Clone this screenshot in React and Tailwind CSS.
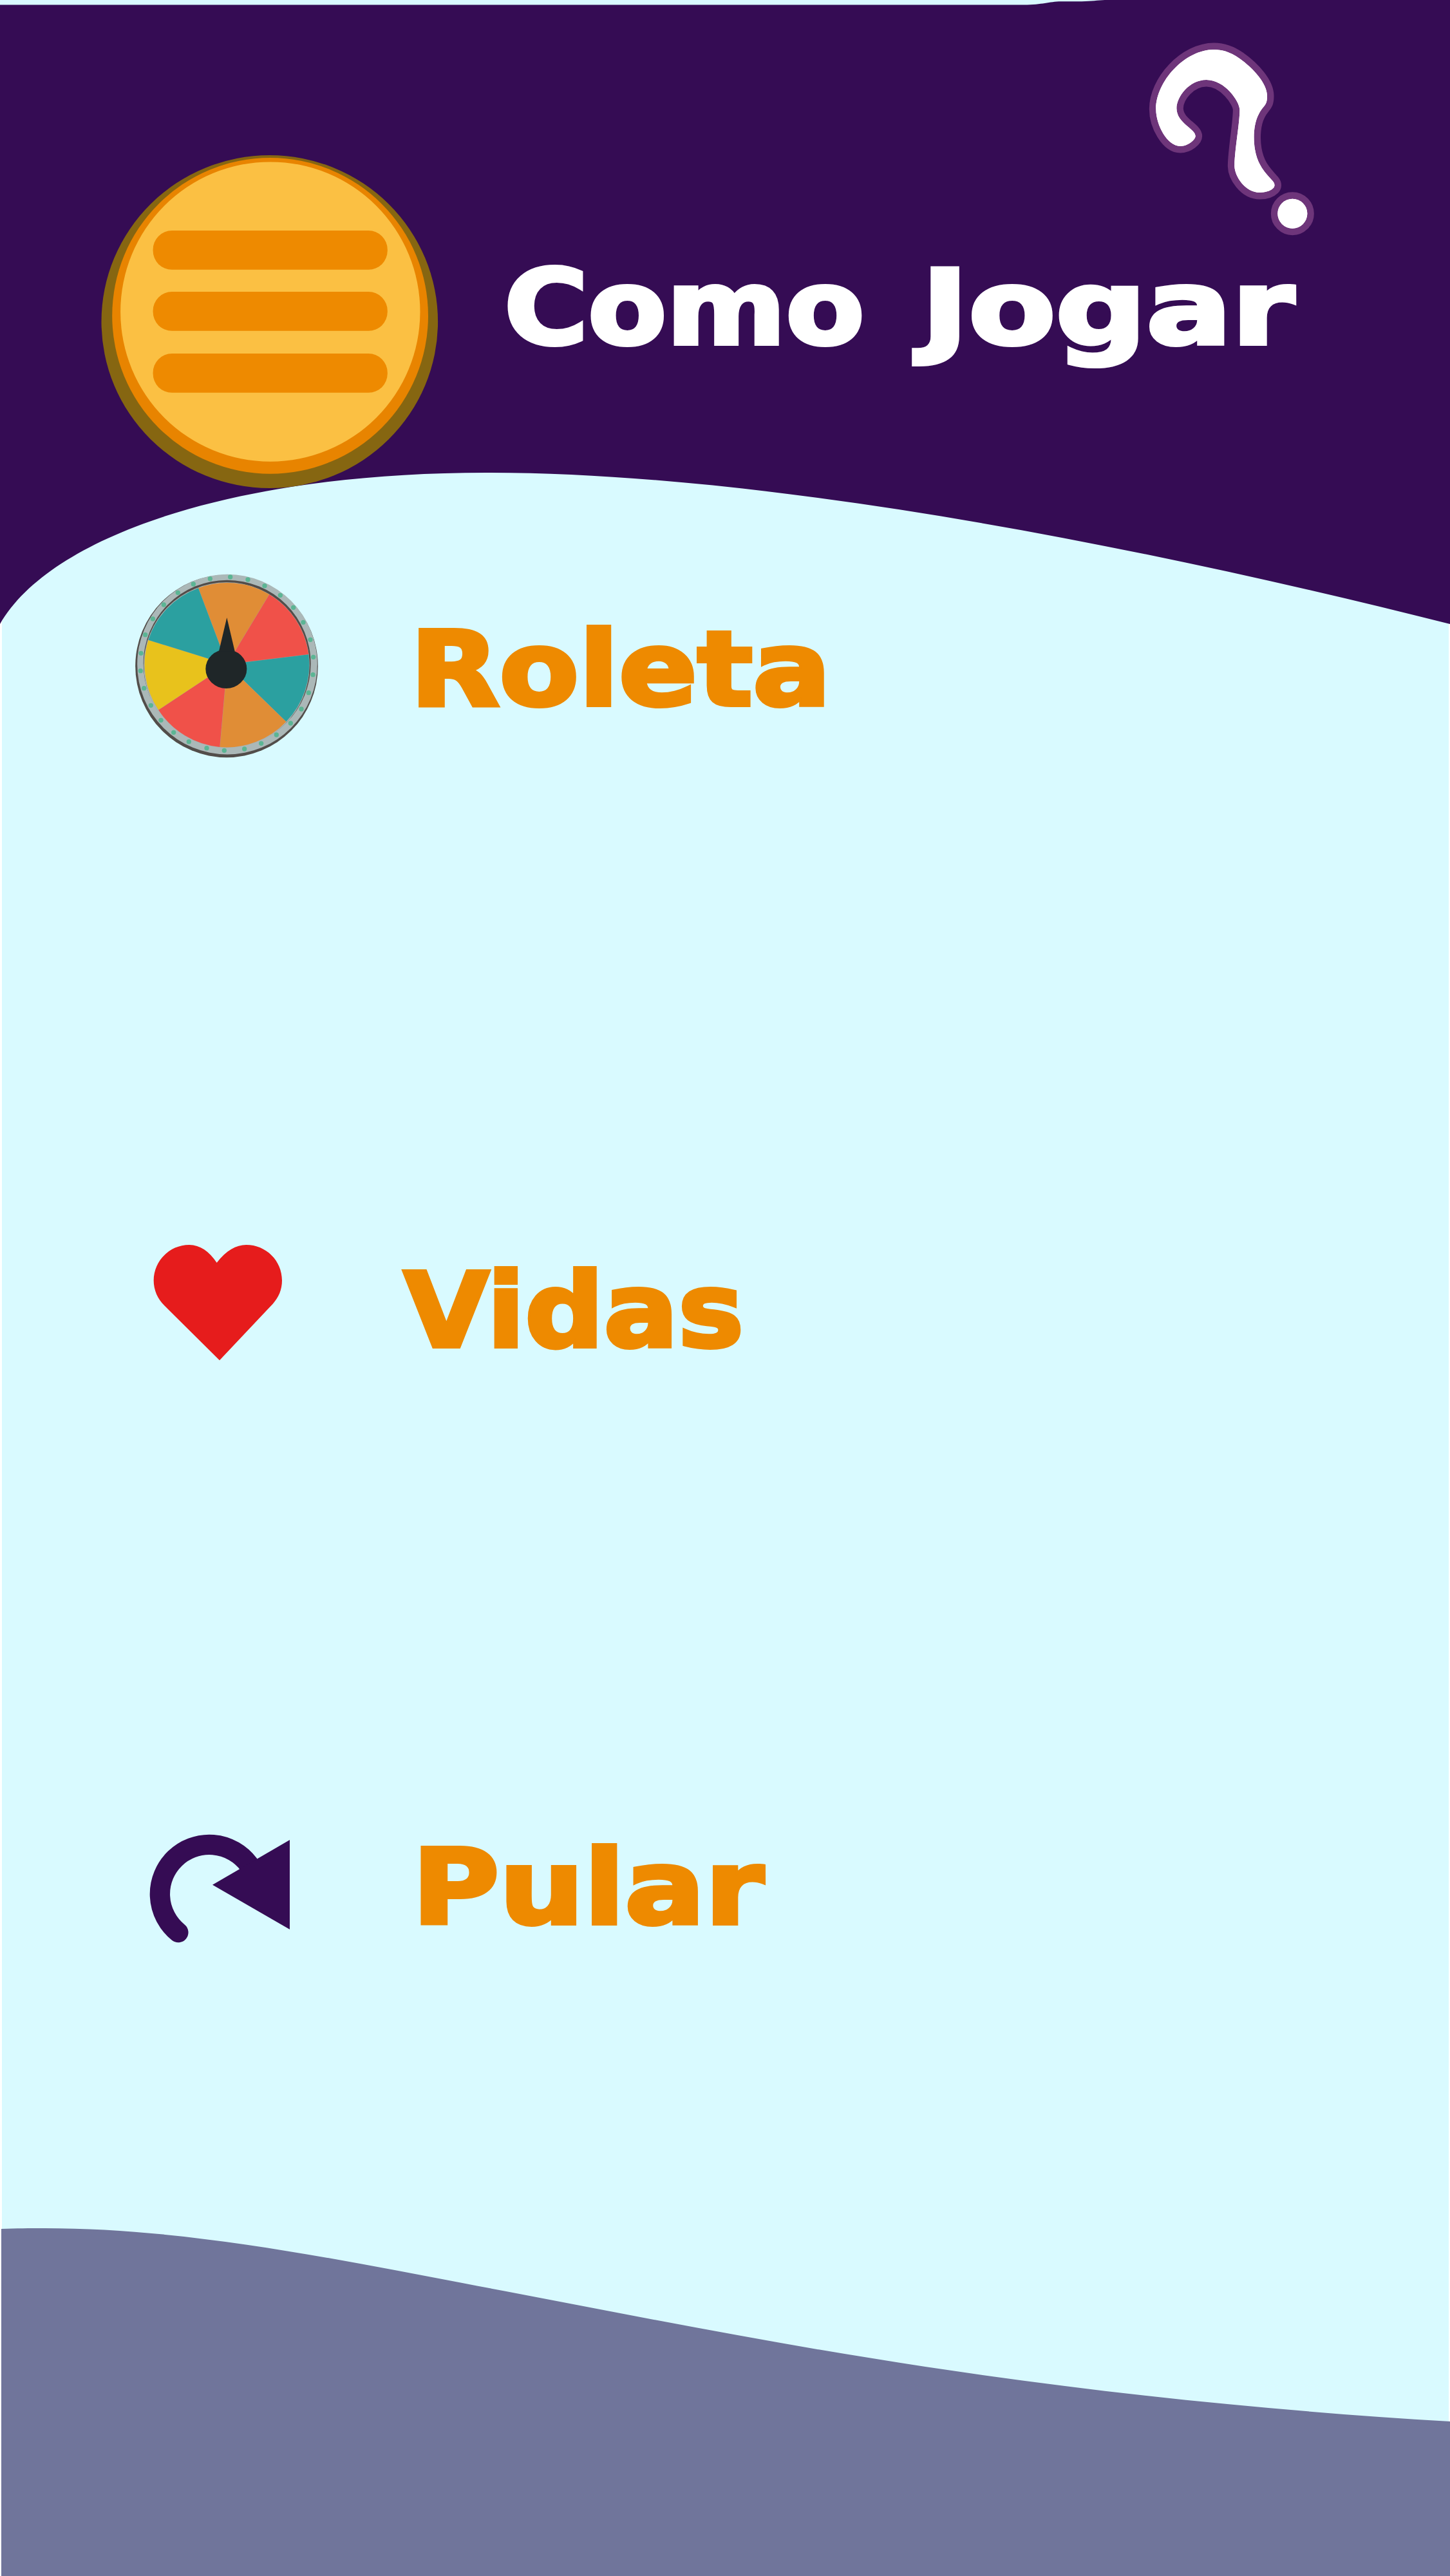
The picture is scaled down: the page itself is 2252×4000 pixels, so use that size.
const DOTS = [
  [473, 48], [555, 60], [633, 89], [706, 133], [767, 190], [813, 259],
  [846, 340], [860, 421], [858, 503], [838, 587], [804, 663], [754, 729],
  [688, 783], [617, 823], [539, 849], [445, 856], [363, 845], [280, 815],
  [209, 772], [150, 715], [103, 646], [71, 566], [55, 485], [57, 403],
  [77, 317], [112, 243], [163, 177], [229, 121], [301, 81], [379, 56],
];

const SLICES = [
  ["324 100", "655 129", "#e08d36"],
  ["655 129", "838 409", "#f05149"],
  ["838 409", "733 722", "#2ba0a0"],
  ["733 722", "424 840", "#e08d36"],
  ["424 840", "138 667", "#f05149"],
  ["138 667", "91 341", "#e8c21c"],
  ["91 341", "324 100", "#2ba0a0"],
];

function Backdrop() {
  return (
    <svg viewBox="0 0 2252 4000" className="absolute inset-0 h-full w-full" aria-hidden="true">
      <path d="M3 0H2250V4000H3Z" fill="#d9faff" />
      <path d="M0 0H10V8H0Z" fill="#d9faff" />
      <path
        d="M0 7.5H1590C1620 7.5 1628 2.5 1648 2.3L1680 2.2C1695 2 1705 .5 1716 0H2252V969C1760 845 1190 734 755 734C370 734 80 830 0 969Z"
        fill="#350c54"
      />
      <path
        d="M2 3461C25 3460 45 3460 69 3460C285 3460 502 3504 718 3545C958 3590.6 1197 3639 1437 3675C1708 3716 1980 3744 2252 3760V4000H2Z"
        fill="#70759b"
      />
    </svg>
  );
}

function MenuButton() {
  return (
    <button aria-label="Menu" className="mt-[240px] ml-[157px] h-[520px] w-[524px] shrink-0">
      <svg viewBox="157 240 524 520" className="block h-full w-full">
        <ellipse cx="418.8" cy="499.5" rx="261.3" ry="258.5" fill="#866611" />
        <circle cx="419.6" cy="490.4" r="245.4" fill="#e88400" />
        <circle cx="419.8" cy="484.1" r="232.7" fill="#fbc043" />
        <rect x="237.6" y="358" width="364.2" height="60.8" rx="29.5" fill="#ee8a00" />
        <rect x="237.6" y="453" width="364.2" height="60.8" rx="29.5" fill="#ee8a00" />
        <rect x="237.6" y="549" width="364.2" height="60.8" rx="29.5" fill="#ee8a00" />
      </svg>
    </button>
  );
}

function QuestionMark() {
  const hook =
    "M377 111C410 111 450 120 495 152C560 198 623 268 624 325C625 375 606 370 585 412C562 455 558 520 567 575C578 640 605 675 645 718C658 731 664 744 652 757C638 771 612 777 590 777C520 777 473 700 472 655C472 580 497 450 496 390C495 352 427 252 341 252C262 252 202 330 202 385C203 455 290 480 290 514C290 530 258 561 219 561C160 561 106 465 106 388C106 260 240 111 377 111Z";
  return (
    <svg viewBox="0 0 930 1020" className="absolute top-[40px] left-[1760px] h-[340px] w-[310px]">
      <g fill="#fff" stroke="#6e357a" strokeWidth="63" strokeLinejoin="round">
        <path d={hook} />
        <circle cx="742" cy="875" r="69" />
      </g>
      <g fill="#fff">
        <path d={hook} />
        <circle cx="742" cy="875" r="69" />
      </g>
    </svg>
  );
}

function Wheel() {
  return (
    <svg viewBox="0 0 930 930" className="ml-[200px] h-[310px] w-[310px] shrink-0">
      <circle cx="456" cy="463" r="425.5" fill="#524d4a" />
      <circle cx="459" cy="455" r="419.5" fill="#abb8b8" />
      <circle cx="458" cy="452" r="390" fill="#524d4a" />
      <circle cx="456" cy="459" r="386" fill="#abb8b8" />
      {SLICES.map(([from, to, color]) => (
        <path
          key={from}
          d={`M458 455L${from}A384 384 0 0 1 ${to}Z`}
          fill={color}
          stroke="#a9a39a"
          strokeWidth="1.5"
        />
      ))}
      {DOTS.map(([x, y]) => (
        <circle key={`${x}-${y}`} cx={x} cy={y} r="11" fill="#5bb594" />
      ))}
      <ellipse cx="454" cy="476" rx="96" ry="91" fill="#1f2628" />
      <path d="M457 237L494 394H420Z" fill="#1f2628" />
    </svg>
  );
}

function Heart() {
  return (
    <svg viewBox="0 0 720 660" className="ml-[220px] h-[220px] w-[240px] shrink-0">
      <path
        d="M350 152C315 100 272 69 222 69C130 69 56 144 56 235C56 280 75 322 106 352L363 607L611 344C638 315 654 278 654 235C654 143 580 69 487 69C440 69 395 95 350 152Z"
        fill="#e61c1c"
      />
    </svg>
  );
}

function SkipArrow() {
  return (
    <svg viewBox="0 0 780 630" className="ml-[210px] h-[210px] w-[260px] shrink-0">
      <path
        d="M200.5 512A230 230 0 1 1 529 195"
        fill="none"
        stroke="#350c54"
        strokeWidth="94"
        strokeLinecap="round"
      />
      <path d="M360 290L720 81V498Z" fill="#350c54" />
    </svg>
  );
}

export default function App() {
  return (
    <div className="relative h-[4000px] w-[2252px] overflow-hidden bg-white font-['DejaVu_Sans',sans-serif] text-[160px] leading-none font-bold [-webkit-text-stroke-width:6px] [paint-order:stroke_fill]">
      <Backdrop />
      <div className="relative flex flex-col">
        <header className="relative flex h-[880px] items-start text-white">
          <MenuButton />
          <h1 className="mt-[399px] ml-[102px] flex whitespace-nowrap">
            <span className="w-[648px] origin-left scale-x-[1.11]">Como </span>
            <span className="origin-left scale-x-[1.23]">Jogar</span>
          </h1>
          <QuestionMark />
        </header>
        <main className="flex flex-col text-[#ee8a00]">
          <section className="flex h-[310px] items-start">
            <Wheel />
            <h2 className="mt-[80px] ml-[127px] origin-left scale-x-[1.125]">Roleta</h2>
          </section>
          <section className="mt-[720px] flex h-[220px] items-start">
            <Heart />
            <h2 className="mt-[46px] ml-[167px] origin-left scale-x-[1.07]">Vidas</h2>
          </section>
          <section className="mt-[700px] flex h-[210px] items-start">
            <SkipArrow />
            <h2 className="mt-[22px] ml-[170px] origin-left scale-x-[1.155]">Pular</h2>
          </section>
        </main>
      </div>
    </div>
  );
}
